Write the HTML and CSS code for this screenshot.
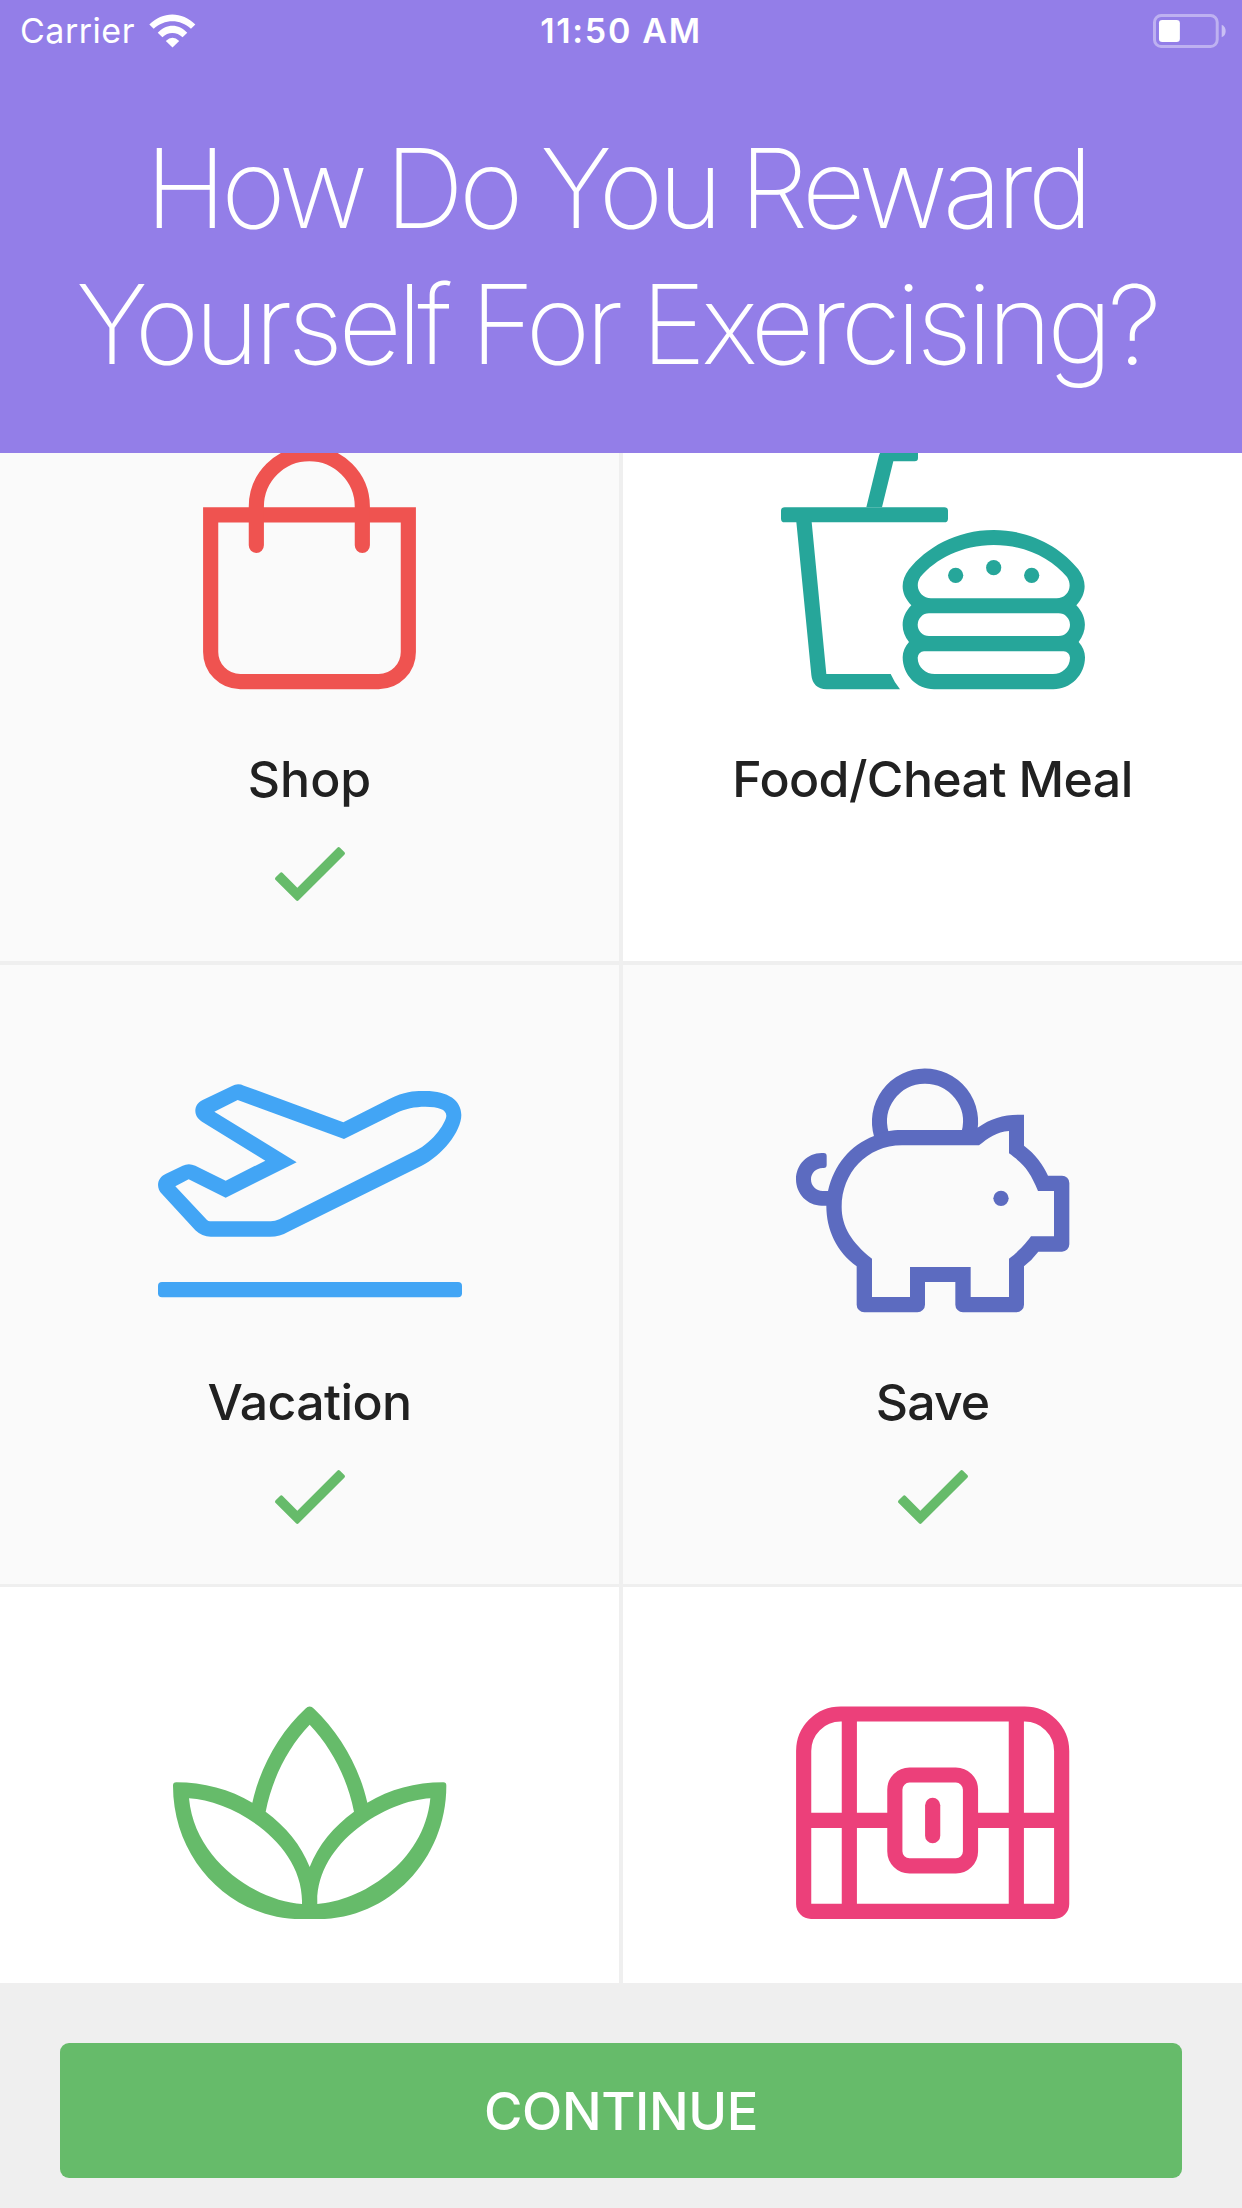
FILE: index.html
```html
<!DOCTYPE html>
<html lang="en">
<head>
<meta charset="utf-8">
<title>Rewards</title>
<link rel="stylesheet" href="styles.css">
</head>
<body>
<div class="screen">
  <header class="header">
    <div class="status">
      <div class="status-left">
        <span class="carrier">Carrier</span>
        <svg class="wifi" viewBox="446 38 140 101">
          <path d="M447 69C486 29 545 29 584 69L571 82C539 52 492 52 460 82Z"/>
          <path d="M472 94C497 66 535 66 560 94L546 107C529 90 502 90 486 107Z"/>
          <path d="M496 118Q516 99 536 118L516 138Z"/>
        </svg>
      </div>
      <span class="time">11:50 AM</span>
      <svg class="battery" viewBox="99 39 220 102">
        <rect class="battery-shell" x="103.500" y="43.500" width="189" height="93" rx="20"/>
        <rect x="117" y="57" width="63" height="66" rx="10"/>
        <path class="battery-cap" d="M306 71Q318 76 318 90T306 109Z"/>
      </svg>
    </div>
    <h1 class="title"><span class="title-a">How Do You Reward</span><br><span class="title-b">Yourself For Exercising?</span></h1>
  </header>

  <main class="list">
    <div class="grid">
      <section class="tile selected">
        <svg class="icon red line" viewBox="-540 -294 1857 1080">
          <path d="M92 224.500H685V636a89 89 0 0 1-89 89H181a89 89 0 0 1-89-89Z"/>
          <path class="round" d="M229 316V200a159 159 0 0 1 318 0V316"/>
        </svg>
        <h2 class="label l-shop">Shop</h2>
        <svg class="check" viewBox="225 353 210 162"><path d="M240 431Q244 427 248 431L292 475L412 355Q416 351 420 355L433 368Q437 372 433 376L296 513Q292 517 288 513L227 452Q223 448 227 444Z"/></svg>
      </section>

      <section class="tile">
        <svg class="icon teal" viewBox="-411 -294 1857 1080">
          <path d="M319 202L356 50Q364 19 395 19H464a10 10 0 0 1 10 10V54a10 10 0 0 1-10 10H400L366 202Z"/>
          <rect x="63" y="201.500" width="501" height="45.500" rx="11"/>
          <path d="M109 246H155L199 702H392Q402 725 420 748H200Q158 746 154 705Z"/>
          <path d="M701 270C815 270 905 325 955 388C982 424 980 462 949 496C982 530 982 572 956 606C968 619 975 635 975 652C975 705 932 748 880 748H522C470 748 428 705 428 652C428 635 435 619 447 606C420 572 421 530 454 496C421 462 420 424 447 388C497 325 587 270 701 270ZM701 315C797 315 875 357 921 411C941 443 920 475 890 475H513C483 475 461 443 481 411C527 357 605 315 701 315ZM507 520a34 34 0 0 0 0 68H896a34 34 0 0 0 0-68ZM492 634H911a19 19 0 0 1 19 19C930 682 905 702 879 702H524C498 702 473 682 473 653a19 19 0 0 1 19-19Z"/>
          <circle cx="587" cy="406" r="22.800"/><circle cx="701" cy="383" r="22.800"/><circle cx="815" cy="406" r="22.800"/>
        </svg>
        <h2 class="label l-food">Food/Cheat Meal</h2>
      </section>

      <section class="tile selected">
        <svg class="icon blue" viewBox="-420 -255 1857 1080">
          <path d="M276 108Q293 98 312 107L610 217L748 147C800 121 830 123 856 123C925 123 964 152 964 195C964 245 905 318 845 347L445 545Q420 560 390 560H212Q186 560 166 541L66 432C46 412 52 382 78 371L128 347Q146 338 166 347L257 392L376 332L186 215C158 198 160 163 188 150ZM293 150L223 185L470 337L257 443L146 388L106 409L201 510Q205 514 210 514H392Q405 514 418 508L825 303C885 273 919 213 919 197C919 178 895 170 856 170C825 170 795 176 769 189L612 267Z"/>
          <rect x="54" y="696" width="912" height="46" rx="12"/>
        </svg>
        <h2 class="label l-vacation">Vacation</h2>
        <svg class="check" viewBox="225 353 210 162"><path d="M240 431Q244 427 248 431L292 475L412 355Q416 351 420 355L433 368Q437 372 433 376L296 513Q292 517 288 513L227 452Q223 448 227 444Z"/></svg>
      </section>

      <section class="tile selected">
        <svg class="icon indigo" viewBox="-441 -255 1857 1080">
          <path class="ring" d="M334 253A136.500 136.500 0 1 1 597 250"/>
          <path d="M395 240H602L625 232C660 206 700 194 745 194H762V287C795 311 820 345 834 377H876a22 22 0 0 1 22 22V583a22 22 0 0 1-22 22H805Q786 630 762 649V764a23 23 0 0 1-23 23H579a23 23 0 0 1-23-23V696H465V764a23 23 0 0 1-23 23H283a23 23 0 0 1-23-23V649C200 605 169 540 169 467H155C112 467 78 432 78 388C78 344 112 309 155 309H161a9 9 0 0 1 9 9V345a9 9 0 0 1-9 9H158C138 354 123 369 123 388C123 408 138 423 158 423H174C192 345 240 285 312 258C338 245 365 240 395 240ZM396 286H627C655 264 680 245 717 243V310C765 345 780 365 804 423H852V559H783C760 590 745 604 717 626V741H602V651H420V741H306V626C245 578 215 530 215 471C215 370 290 286 396 286Z"/>
          <circle cx="693" cy="445" r="23"/>
        </svg>
        <h2 class="label l-save">Save</h2>
        <svg class="check" viewBox="225 353 210 162"><path d="M240 431Q244 427 248 431L292 475L412 355Q416 351 420 355L433 368Q437 372 433 376L296 513Q292 517 288 513L227 452Q223 448 227 444Z"/></svg>
      </section>

      <section class="tile last">
        <svg class="icon green" viewBox="-450 -276 1857 1080">
          <path d="M466 86Q479 73 492 86C570 160 628 262 652 368C720 328 795 307 880 307Q889 307 889 317C889 540 715 717 505 717H453C243 717 69 540 69 317Q69 307 79 307C160 307 240 328 307 368C330 262 390 155 466 86ZM479 134C545 203 592 295 612 395C550 440 505 495 479 561C453 495 408 440 347 395C367 295 413 203 479 134ZM117 355C250 362 462 490 456 672C330 665 135 550 117 355ZM841 355C708 362 496 490 502 672C628 665 823 550 841 355Z"/>
        </svg>
      </section>

      <section class="tile last">
        <svg class="icon pink line" viewBox="-441 -276 1857 1080">
          <path d="M101 213a111 111 0 0 1 111-111H764a111 111 0 0 1 111 111V672a22 22 0 0 1-22 22H123a22 22 0 0 1-22-22ZM238 102V694M739 102V694M101 421H375M602 421H875"/>
          <rect x="374.500" y="285" width="227" height="272.500" rx="44"/>
          <path class="round" d="M488 376V467"/>
        </svg>
      </section>
    </div>
  </main>

  <footer class="footer">
    <button class="continue">CONTINUE</button>
  </footer>
</div>
</body>
</html>
```
FILE: styles.css
```css
* { box-sizing: border-box; }
body { margin: 0; font-family: Inter, "Liberation Sans", sans-serif; }
.screen {
  width: 1242px;
  height: 2208px;
  display: flex;
  flex-direction: column;
  overflow: hidden;
  background: #efefef;
}

.header { height: 453px; flex: none; background: #937ee8; color: #fff; }
.status {
  height: 60px;
  padding: 0 16px 0 20px;
  display: grid;
  grid-template-columns: 1fr auto 1fr;
  align-items: center;
}
.status-left { display: flex; align-items: center; gap: 14px; }
.carrier, .time { font-size: 34px; line-height: 60px; padding-top: 1px; }
.carrier { letter-spacing: 0.5px; }
.time { font-weight: 600; letter-spacing: 1.7px; margin: 0 2.4px 0 -1.6px; }
.wifi { width: 47px; height: 34px; fill: #fff; }
.battery { width: 73px; height: 34px; fill: #fff; justify-self: end; }
.battery-shell { fill: none; stroke: #fff; stroke-width: 9; opacity: 0.4; }
.battery-cap { opacity: 0.5; }
.title {
  margin: 60px 9px 0 0;
  font-size: 110px;
  font-weight: 200;
  line-height: 136px;
  text-align: center;
  white-space: nowrap;
  word-spacing: -4px;
}
.title-a { letter-spacing: -5px; }
.title-b { letter-spacing: -4.6px; }

.list { height: 1530px; flex: none; overflow: hidden; }
.grid {
  margin-top: -111px;
  display: grid;
  grid-template-columns: 619px 619px;
  grid-auto-rows: 619px;
  gap: 4px;
}
.tile { background: #fff; display: flex; flex-direction: column; align-items: center; }
.tile.selected { background: #fafafa; }
.tile.last { margin-top: -1px; padding-top: 1px; }
.icon { width: 619px; height: 360px; flex: none; fill: currentColor; fill-rule: evenodd; }
.line, .ring { fill: none; stroke: currentColor; stroke-width: 45.5; }
.round { stroke-linecap: round; }
.red { color: #ef5350; }
.teal { color: #26a69a; }
.blue { color: #42a5f5; }
.indigo { color: #5c6bc0; }
.green { color: #66bb6a; }
.pink { color: #ec407a; }
.label {
  margin: 46px 0 0;
  font-size: 50px;
  font-weight: 500;
  line-height: 62px;
  color: #212121;
}
.l-food { letter-spacing: -0.6px; }
.l-vacation { letter-spacing: -0.6px; }
.l-save { letter-spacing: -0.9px; }
.check { width: 70px; height: 54px; margin-top: 37.4px; fill: #66bb6a; }

.footer { flex: 1; padding: 60px 60px 0; }
.continue {
  width: 100%;
  height: 135px;
  padding: 2px 0 0;
  border: 0;
  border-radius: 9px;
  background: #66bb6a;
  color: #fff;
  font: 500 52.5px/133px Inter, "Liberation Sans", sans-serif;
  letter-spacing: -0.4px;
}
```
